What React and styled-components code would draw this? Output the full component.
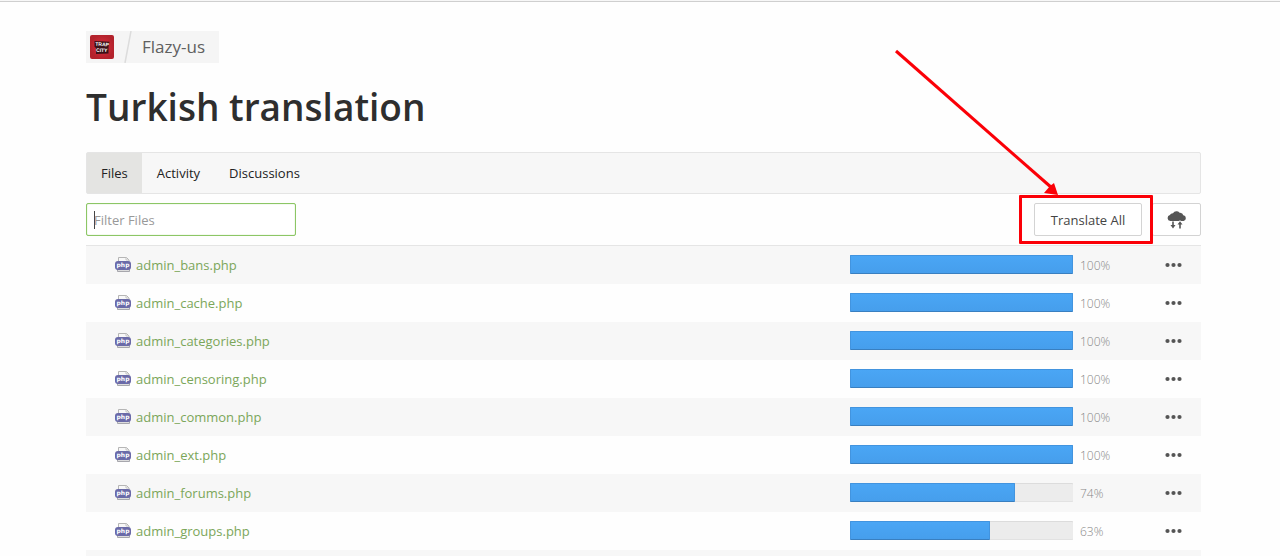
import React from 'react';
import styled, { createGlobalStyle } from 'styled-components';

const GlobalStyle = createGlobalStyle`
  * { box-sizing: border-box; }
  html, body { margin: 0; }
  body {
    background: #fefefe;
    color: #2e2e2e;
    font-family: "Open Sans", "Noto Sans", sans-serif;
    font-size: 13px;
    line-height: 20px;
  }
`;

const Page = styled.div`
  height: 100vh;
  overflow: hidden;
`;

const TopEdge = styled.div`
  height: 2px;
  background: #f7f7f7;
  border-bottom: 1px solid #cfcfcf;
`;

const Main = styled.main`
  padding: 29px 79px 0 86px;
`;

const Breadcrumb = styled.nav`
  display: inline-flex;
  align-items: center;
  height: 32px;
  padding: 0 14px 0 4px;
  background: #f5f5f5;
  vertical-align: top;
`;

const CrumbLink = styled.a`
  display: flex;
  color: #606060;
  font-size: 17px;
  line-height: 32px;
  text-decoration: none;
`;

const Slash = styled.svg`
  margin: 0 10px;
`;

const Title = styled.h1`
  margin: 19px 0 0;
  color: #2e2e2e;
  font-size: 37px;
  font-weight: 600;
  line-height: 50px;
`;

const Tabs = styled.nav`
  display: flex;
  gap: 1px;
  height: 42px;
  margin-top: 20px;
  background: #f7f7f7;
  border: 1px solid #e5e5e5;
  border-radius: 2px;
`;

const Tab = styled.a`
  padding: 0 14px;
  background: ${(p) => (p.$active ? '#e4e4e2' : 'transparent')};
  color: #222;
  line-height: 40px;
  text-decoration: none;
`;

const Toolbar = styled.div`
  display: flex;
  align-items: center;
  justify-content: space-between;
  margin: 9px 0;
`;

const FilterInput = styled.input`
  width: 210px;
  height: 33px;
  padding: 0 7px;
  border: 1px solid #8cc665;
  border-radius: 2px;
  outline: none;
  background: linear-gradient(#444, #444) 7px center / 1px 18px no-repeat #fff;
  box-shadow: inset 0 0 1px #8cc665;
  color: #333;
  font: inherit;
  &::placeholder { color: #999; opacity: 1; }
`;

const Actions = styled.div`
  display: flex;
  gap: 10px;
`;

const Highlighted = styled.div`
  position: relative;
`;

const Button = styled.button`
  display: flex;
  align-items: center;
  justify-content: center;
  width: ${(p) => (p.$icon ? '49px' : '108px')};
  height: 33px;
  padding: 0;
  border: 1px solid #d3d3d3;
  border-radius: 2px;
  background: #fff;
  color: #444;
  font: inherit;
  white-space: nowrap;
`;

const HighlightFrame = styled.div`
  position: absolute;
  inset: -8px -11px -8px -15px;
  z-index: 1;
  border: 3px solid #fb0007;
  border-radius: 1px;
  pointer-events: none;
`;

const Arrow = styled.svg`
  position: absolute;
  right: 80px;
  bottom: 38px;
  z-index: 2;
  pointer-events: none;
`;

const FileTable = styled.table`
  width: 100%;
  border-collapse: separate;
  border-spacing: 0;
  border-top: 1px solid #e5e5e5;
  table-layout: fixed;
`;

const Row = styled.tr`
  height: 38px;
  &:nth-child(odd) { background: #f7f7f7; }
`;

const Cell = styled.td`
  width: ${(p) => p.$width || 'auto'};
  padding: ${(p) => p.$pad || '0 0 1px'};
`;

const FileLink = styled.a`
  display: flex;
  align-items: center;
  gap: 5px;
  color: #7ba65a;
  text-decoration: none;
`;

const Track = styled.div`
  height: 19px;
  background: #ececec;
  border-radius: 1px;
  box-shadow: inset 0 1px 0 #dcdcdc, inset 0 -1px 0 #e2e2e2;
`;

const Fill = styled.div`
  height: 100%;
  background: linear-gradient(#4aa6f5, #469eec);
  border: 1px solid #4294df;
  border-bottom-color: #397fc0;
  border-radius: 1px;
`;

const Percent = styled.span`
  color: #888;
  font-size: 12px;
  font-weight: 300;
`;

const MoreButton = styled.button`
  display: flex;
  padding: 4px;
  border: 0;
  background: none;
`;

function Logo() {
  return (
    <svg width="24" height="24" viewBox="0 0 24 24" role="img" aria-label="Trap City">
      <defs>
        <radialGradient id="logoRed">
          <stop offset="0" stopColor="#b51f2c" />
          <stop offset="0.6" stopColor="#c42733" />
          <stop offset="1" stopColor="#b3222c" />
        </radialGradient>
      </defs>
      <rect width="24" height="24" rx="2" fill="url(#logoRed)" />
      <path d="M4.500 6l15 .8-1 5.200v6.500l-12.500.500v-6l-1.500-1z" fill="#3a1219" />
      <g fill="#fff" fontFamily="Liberation Sans, sans-serif" fontWeight="700" fontSize="5" textAnchor="middle" transform="rotate(3 12 12)">
        <text x="12" y="11">TRAP</text>
        <text x="12" y="17">CITY</text>
      </g>
    </svg>
  );
}

function PhpIcon() {
  return (
    <svg width="16" height="16" viewBox="0 0 16 16" aria-hidden="true">
      <path d="M3.500 5V.5h8l2.500 2.500V5" fill="#f8f8f8" stroke="#b5b5b5" />
      <path d="M11 .5V3h3" fill="none" stroke="#c5c5c5" />
      <path d="M2.500 12v2.500h12V12" fill="#ddd" stroke="#a7a7ad" />
      <rect x="0" y="4" width="16" height="9" rx="3" fill="#6a6aa8" />
      <text x="8" y="10" fill="#fff" fontFamily="DejaVu Sans, sans-serif" fontSize="6" fontWeight="700" textAnchor="middle">php</text>
    </svg>
  );
}

function CloudIcon() {
  return (
    <svg width="20" height="18" viewBox="0 0 20 18" fill="#555" aria-hidden="true">
      <path d="M3.300 10a3 3 0 0 1-.4-5.900A3.300 3.300 0 0 1 6 2.200 4.200 4.200 0 0 1 12.600 1.700 3.400 3.400 0 0 1 16.300 4.300a2.900 2.900 0 0 1 .3 5.700z" />
      <path d="M5.200 10.500h1.600v3.500H8.500L6 17.500 3.500 14h1.700z" />
      <path d="M12.200 17.500v-4H10.500L13 10.200l2.500 3.300h-1.700v4z" stroke="#fff" strokeWidth="1.400" paintOrder="stroke" />
    </svg>
  );
}

const files = [
  ['admin_bans.php', 100],
  ['admin_cache.php', 100],
  ['admin_categories.php', 100],
  ['admin_censoring.php', 100],
  ['admin_common.php', 100],
  ['admin_ext.php', 100],
  ['admin_forums.php', 74],
  ['admin_groups.php', 63],
];

function FileRow({ name, percent }) {
  return (
    <Row>
      <Cell $pad="0 0 0 29px">
        <FileLink href="#"><PhpIcon />{name}</FileLink>
      </Cell>
      <Cell $width="223px">
        <Track role="progressbar" aria-label={name} aria-valuenow={percent} aria-valuemin={0} aria-valuemax={100}>
          <Fill style={{ width: `${percent}%` }} />
        </Track>
      </Cell>
      <Cell $width="88px" $pad="0 0 0 7px"><Percent>{percent}%</Percent></Cell>
      <Cell $width="40px">
        <MoreButton type="button" aria-label={`More actions for ${name}`}>
          <svg width="17" height="6" viewBox="0 0 17 6" fill="#555">
            <circle cx="2.500" cy="3" r="2.100" />
            <circle cx="8.500" cy="3" r="2.100" />
            <circle cx="14.500" cy="3" r="2.100" />
          </svg>
        </MoreButton>
      </Cell>
    </Row>
  );
}

export default function App() {
  return (
    <Page>
      <GlobalStyle />
      <TopEdge />
      <Main>
        <Breadcrumb aria-label="Breadcrumb">
          <CrumbLink href="#"><Logo /></CrumbLink>
          <Slash width="8" height="32" viewBox="0 0 8 32" aria-hidden="true">
            <path d="M7 0L1 32" stroke="#dcdcdc" strokeWidth="1.500" />
          </Slash>
          <CrumbLink href="#">Flazy-us</CrumbLink>
        </Breadcrumb>
        <Title>Turkish translation</Title>
        <Tabs aria-label="Sections">
          <Tab href="#" $active aria-current="page">Files</Tab>
          <Tab href="#">Activity</Tab>
          <Tab href="#">Discussions</Tab>
        </Tabs>
        <Toolbar>
          <FilterInput type="text" aria-label="Filter Files" placeholder="Filter Files" />
          <Actions>
            <Highlighted>
              <Button type="button">Translate All</Button>
              <HighlightFrame />
              <Arrow width="170" height="150" viewBox="0 0 170 150" aria-hidden="true">
                <path d="M4 3L160 140" stroke="#fb0007" strokeWidth="3" fill="none" />
                <path d="M166 147l-4-12-4 3-6 7z" fill="#fb0007" />
              </Arrow>
            </Highlighted>
            <Button type="button" $icon aria-label="Upload or download"><CloudIcon /></Button>
          </Actions>
        </Toolbar>
        <FileTable aria-label="Files">
          <tbody>
            {files.map(([name, percent]) => <FileRow key={name} name={name} percent={percent} />)}
            <Row aria-hidden="true"><Cell colSpan={4} /></Row>
          </tbody>
        </FileTable>
      </Main>
    </Page>
  );
}
